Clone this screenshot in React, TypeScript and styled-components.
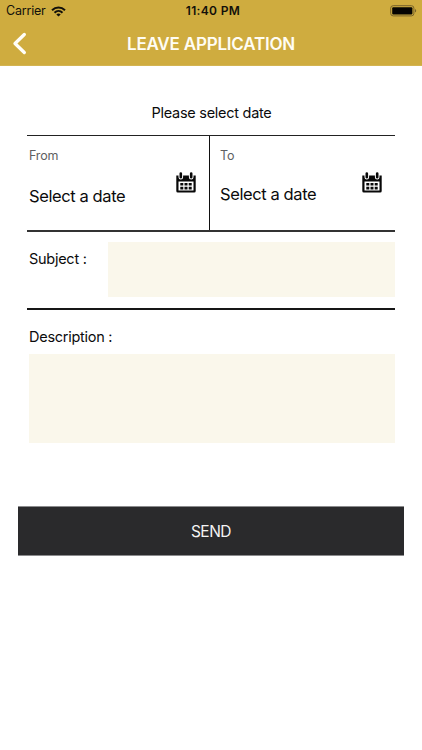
import React from "react";
import styled, { createGlobalStyle } from "styled-components";

const GlobalStyle = createGlobalStyle`
  * { box-sizing: border-box; }
  body { margin: 0; background: #fff; font-family: Inter, "Liberation Sans", sans-serif; color: #0b0b0c; }
`;

const Screen = styled.div`
  width: 422px;
  height: 750px;
  overflow: hidden;
  background: #fff;
`;
const Header = styled.header`
  height: 66px;
  background: #cfac3f;
  border-bottom: 1px solid #d3b452;
`;
const StatusBar = styled.div`
  height: 22px;
  display: grid;
  grid-template-columns: 1fr auto 1fr;
  align-items: center;
  padding: 0 5px 0 6px;
  color: #12100a;
  font-size: 12.5px;
  line-height: 22px;
`;
const Carrier = styled.div`
  display: flex;
  align-items: center;
  gap: 5px;
  letter-spacing: -0.2px;
`;
const Clock = styled.div`
  padding-left: 3px;
  font-size: 12px;
  font-weight: 600;
  letter-spacing: 0.35px;
`;
const Battery = styled.div`
  display: flex;
  justify-content: flex-end;
`;
const NavBar = styled.div`
  height: 43px;
  display: grid;
  grid-template-columns: 40px 1fr 40px;
  align-items: center;
`;
const BackButton = styled.button`
  border: 0;
  background: none;
  padding: 0 0 1px 12px;
  height: 43px;
  display: flex;
  align-items: center;
`;
const Title = styled.h1`
  margin: 0;
  color: #fffdf4;
  font-size: 17px;
  font-weight: 600;
  line-height: 43px;
  padding-top: 1px;
  text-align: center;
  letter-spacing: -0.2px;
`;
const Form = styled.main`
  padding: 0 27px;
`;
const Prompt = styled.p`
  margin: 0;
  height: 69px;
  padding: 37px 0 0 1px;
  font-size: 14.5px;
  line-height: 20px;
  text-align: center;
  letter-spacing: -0.27px;
`;
const Dates = styled.section`
  display: grid;
  grid-template-columns: 183px 1fr;
  height: 97px;
  border-top: 1px solid #222;
  border-bottom: 2px solid #333;
`;
const DateField = styled.div<{ $divided?: boolean }>`
  display: flex;
  justify-content: space-between;
  padding: ${(p) => (p.$divided ? "0 13px 0 2px" : "0 13px 0 10px")};
  border-right: ${(p) => (p.$divided ? "1px solid #111" : "0")};
`;
const DateText = styled.div<{ $gap: number }>`
  display: flex;
  flex-direction: column;
  gap: ${(p) => p.$gap}px;
  padding-top: 11px;
`;
const Caption = styled.span`
  color: #606062;
  font-size: 12.5px;
  line-height: 17px;
  letter-spacing: -0.15px;
`;
const DateValue = styled.span`
  font-size: 16.5px;
  line-height: 22px;
  letter-spacing: -0.4px;
`;
const CalendarSlot = styled.div`
  padding-top: 36px;
`;
const SubjectRow = styled.section`
  display: grid;
  grid-template-columns: 81px 1fr;
  height: 78px;
  padding-top: 10px;
  border-bottom: 2px solid #161616;
`;
const Label = styled.label<{ $top: number }>`
  display: block;
  padding: ${(p) => p.$top}px 0 0 2px;
  font-size: 14.5px;
  line-height: 20px;
  letter-spacing: -0.27px;
`;
const Field = styled.div<{ $height: number; $indent?: number }>`
  height: ${(p) => p.$height}px;
  margin-left: ${(p) => p.$indent ?? 0}px;
  background: #faf7eb;
`;
const Description = styled.section`
  display: flex;
  flex-direction: column;
  gap: 7px;
`;
const SendButton = styled.button`
  display: block;
  width: 386px;
  height: 50px;
  margin: 63px 18px 0;
  padding: 1px 0 0;
  border: 0;
  border-top: 1px solid #8b8b8d;
  border-bottom: 1px solid #8b8b8d;
  background: #2a2a2c;
  color: #f4f4f4;
  font-family: inherit;
  font-size: 15.5px;
  line-height: 47px;
  letter-spacing: -0.5px;
`;

const WifiIcon = () => (
  <svg width="15" height="11" viewBox="0 0 15 11" fill="none" stroke="#12100a" strokeWidth="2">
    <path d="M1 4.2C4.8.5 10.200.5 14 4.200" />
    <path d="M3.500 6.700C5.800 4.500 9.200 4.500 11.500 6.700" />
    <path d="M7.500 10.600 5.300 8.400C6.500 7.300 8.500 7.300 9.700 8.400Z" fill="#12100a" stroke="none" />
  </svg>
);

const BatteryIcon = () => (
  <svg width="27" height="12" viewBox="0 0 27 12">
    <rect x="0.700" y="0.700" width="23.200" height="10.200" rx="2.500" fill="none" stroke="#77622a" />
    <rect x="2.200" y="2.200" width="20.200" height="7.200" rx="1" fill="#050402" />
    <path d="M25 4v3.600c1.600-.6 1.600-3 0-3.600Z" fill="#77622a" />
  </svg>
);

const BackIcon = () => (
  <svg width="15" height="23" viewBox="0 0 15 23" fill="none" stroke="#fffef9" strokeWidth="3.300" strokeLinecap="round" strokeLinejoin="round">
    <path d="M12.300 2.500 3 11.500l9.300 9" />
  </svg>
);

const CalendarIcon = () => (
  <svg width="20" height="21" viewBox="0 0 20 21">
    <path d="M.3 3.500h19.400V19a1.500 1.500 0 0 1-1.500 1.500H1.800A1.500 1.500 0 0 1 .3 19Z" fill="#080808" />
    <path d="M4.800 1.500v3.700M15.200 1.500v3.700" stroke="#fff" strokeWidth="4.600" strokeLinecap="round" />
    <path d="M4.800 1.500v3.700M15.200 1.500v3.700" stroke="#080808" strokeWidth="2.600" strokeLinecap="round" />
    <path d="M2.500 9.500h15v9h-15Z" fill="#fff" />
    <path d="M4.300 10.900h3v2.600h-3ZM8.500 10.900h3v2.600h-3ZM12.700 10.900h3v2.600h-3ZM4.300 14.800h3v2.600h-3ZM8.500 14.800h3v2.600h-3ZM12.700 14.800h3v2.600h-3Z" fill="#080808" />
  </svg>
);

export default function App() {
  return (
    <Screen>
      <GlobalStyle />
      <Header>
        <StatusBar>
          <Carrier>Carrier <WifiIcon /></Carrier>
          <Clock>11:40 PM</Clock>
          <Battery><BatteryIcon /></Battery>
        </StatusBar>
        <NavBar>
          <BackButton aria-label="Back"><BackIcon /></BackButton>
          <Title>LEAVE APPLICATION</Title>
        </NavBar>
      </Header>
      <Form>
        <Prompt>Please select date</Prompt>
        <Dates>
          <DateField $divided>
            <DateText $gap={21}>
              <Caption>From</Caption>
              <DateValue>Select a date</DateValue>
            </DateText>
            <CalendarSlot><CalendarIcon /></CalendarSlot>
          </DateField>
          <DateField>
            <DateText $gap={19}>
              <Caption>To</Caption>
              <DateValue>Select a date</DateValue>
            </DateText>
            <CalendarSlot><CalendarIcon /></CalendarSlot>
          </DateField>
        </Dates>
        <SubjectRow>
          <Label $top={7}>Subject :</Label>
          <Field $height={55} />
        </SubjectRow>
        <Description>
          <Label $top={17}>Description :</Label>
          <Field $height={89} $indent={2} />
        </Description>
      </Form>
      <SendButton>SEND</SendButton>
    </Screen>
  );
}
